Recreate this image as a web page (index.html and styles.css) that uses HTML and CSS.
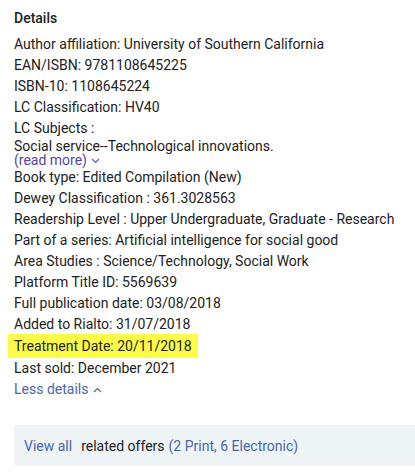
FILE: index.html
```html
<!DOCTYPE html>
<html>
<head>
<meta charset="utf-8">
<link rel="stylesheet" href="styles.css">
</head>
<body>
<div class="panel">
  <div class="heading">Details</div>
  <div class="list">
    <div class="row">Author affiliation: University of Southern California</div>
    <div class="row">EAN/ISBN: 9781108645225</div>
    <div class="row">ISBN-10: 1108645224</div>
    <div class="row">LC Classification: HV40</div>
    <div class="row subjects">
      <div class="label">LC Subjects :</div>
      <div class="value">Social service--Technological innovations.</div>
      <div class="value"><a class="more" href="#">(read more)</a> <svg class="chev" width="9" height="6" viewBox="0 0 9 6"><path d="M1 1l3.5 3.5L8 1" fill="none" stroke="#4a66a8" stroke-width="1.2"/></svg></div>
    </div>
    <div class="row">Book type: Edited Compilation (New)</div>
    <div class="row">Dewey Classification : 361.3028563</div>
    <div class="row">Readership Level : Upper Undergraduate, Graduate - Research</div>
    <div class="row">Part of a series: Artificial intelligence for social good</div>
    <div class="row">Area Studies : Science/Technology, Social Work</div>
    <div class="row">Platform Title ID: 5569639</div>
    <div class="row">Full publication date: 03/08/2018</div>
    <div class="row">Added to Rialto: 31/07/2018</div>
    <div class="row"><span class="highlight">Treatment Date: 20/11/2018</span></div>
    <div class="row">Last sold: December 2021</div>
    <div class="row"><a class="less" href="#">Less details</a> <svg class="chev" width="9" height="6" viewBox="0 0 9 6"><path d="M1 5l3.5-3.5L8 5" fill="none" stroke="#4a66a8" stroke-width="1.2"/></svg></div>
  </div>
  <div class="related">
    <a class="link" href="#">View all</a><span class="txt">related offers</span><a class="link" href="#">(2 Print, 6 Electronic)</a>
  </div>
</div>
</body>
</html>
```

FILE: styles.css
```css
html, body {
  margin: 0;
  padding: 0;
  background: #ffffff;
}
body {
  font-family: Roboto, "Liberation Sans", sans-serif;
  font-size: 14px;
  color: #222222;
}
.panel {
  padding: 8px 0 0 14px;
}
.heading {
  font-weight: 500;
  line-height: 21px;
  margin-bottom: 5px;
  color: #222;
}
.row {
  line-height: 21px;
  white-space: nowrap;
}
.subjects .value {
  line-height: 14px;
}
a {
  text-decoration: none;
}
.more {
  color: #55479a;
}
.less, .link {
  color: #4a66a8;
}
.chev {
  vertical-align: middle;
  margin-left: 1px;
}
.highlight {
  display: inline-block;
  background: #fbfb48;
  padding: 1px 6px;
  margin-left: -6px;
  line-height: 22px;
  margin-top: -1px;
}
.related {
  margin-top: 25px;
  background: #eef3f6;
  border-radius: 4px 0 0 4px;
  height: 41px;
  display: flex;
  align-items: center;
  padding-left: 10px;
}
.related .txt {
  margin: 0 4px 0 9px;
  color: #222;
}
```
